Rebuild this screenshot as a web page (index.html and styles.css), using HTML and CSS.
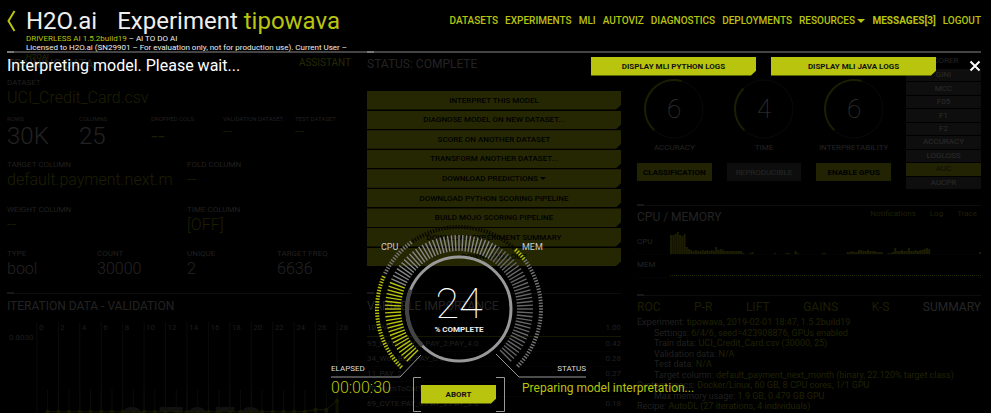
FILE: index.html
```html
<!DOCTYPE html>
<html lang="en">
<head>
<meta charset="utf-8">
<title>H2O.ai Experiment tipowava</title>
<link rel="stylesheet" href="styles.css">
</head>
<body>
<header class="topbar">
  <div class="brand">
    <div class="brand-row">
      <a class="back" href="#" aria-label="Back"><svg width="9" height="22" viewBox="0 0 9 22"><path d="M7.500 1L1.500 11l6 10"/></svg></a>
      <h1 class="brand-title"><span class="company">H2O.ai</span><span>Experiment <span class="accent">tipowava</span></span></h1>
    </div>
    <p class="license"><span class="accent">DRIVERLESS AI 1.5.2build19</span> – AI TO DO AI<br>Licensed to H2O.ai (SN29901 – For evaluation only, not for production use). Current User –<br><span class="accent">H2OAI</span></p>
  </div>
  <nav class="nav">
    <a href="#">DATASETS</a><a href="#">EXPERIMENTS</a><a href="#">MLI</a><a href="#">AUTOVIZ</a><a href="#">DIAGNOSTICS</a><a href="#">DEPLOYMENTS</a><a href="#">RESOURCES <span class="caret"></span></a><a class="strong" href="#">MESSAGES[3]</a><a href="#">LOGOUT</a>
  </nav>
</header>

<main class="dashboard">
  <div class="column">
    <section class="panel training">
      <div class="panel-head"><h2>TRAINING DATA</h2><a class="assistant" href="#">ASSISTANT</a></div>
      <dl class="facts one"><div><dt>DATASET</dt><dd class="accent">UCI_Credit_Card.csv</dd></div></dl>
      <dl class="facts five">
        <div><dt>ROWS</dt><dd>30K</dd></div><div><dt>COLUMNS</dt><dd>25</dd></div>
        <div><dt>DROPPED COLS</dt><dd class="accent">--</dd></div>
        <div><dt>VALIDATION DATASET</dt><dd class="accent small">--</dd></div>
        <div><dt>TEST DATASET</dt><dd class="accent small">--</dd></div>
      </dl>
      <dl class="facts two">
        <div><dt>TARGET COLUMN</dt><dd class="accent">default.payment.next.month</dd></div>
        <div><dt>FOLD COLUMN</dt><dd class="accent">--</dd></div>
        <div><dt>WEIGHT COLUMN</dt><dd class="accent">--</dd></div>
        <div><dt>TIME COLUMN</dt><dd class="accent">[OFF]</dd></div>
      </dl>
      <dl class="facts four">
        <div><dt>TYPE</dt><dd>bool</dd></div><div><dt>COUNT</dt><dd>30000</dd></div>
        <div><dt>UNIQUE</dt><dd>2</dd></div><div><dt>TARGET FREQ</dt><dd>6636</dd></div>
      </dl>
    </section>
    <section class="panel ruled">
      <div class="panel-head"><h2>ITERATION DATA - VALIDATION</h2></div>
      <svg class="iterations" id="iterations" viewBox="0 0 345 110"></svg>
    </section>
  </div>

  <div class="column">
    <section class="panel status">
      <div class="panel-head"><h2>STATUS: COMPLETE</h2></div>
      <div class="actions">
        <button>INTERPRET THIS MODEL</button>
        <button>DIAGNOSE MODEL ON NEW DATASET...</button>
        <button>SCORE ON ANOTHER DATASET</button>
        <button>TRANSFORM ANOTHER DATASET...</button>
        <button>DOWNLOAD PREDICTIONS <span class="caret"></span></button>
        <button>DOWNLOAD PYTHON SCORING PIPELINE</button>
        <button>BUILD MOJO SCORING PIPELINE</button>
        <button>DOWNLOAD EXPERIMENT SUMMARY</button>
        <button>DOWNLOAD LOGS</button>
      </div>
    </section>
    <section class="panel ruled">
      <div class="panel-head"><h2>VARIABLE IMPORTANCE</h2></div>
      <table class="importance">
        <tr class="full"><td>10_PAY_0</td><td>1.00</td></tr>
        <tr><td>95_CVTE:PAY_0:PAY_2:PAY_4.0</td><td>0.42</td></tr>
        <tr><td>34_WoE:BILL:PAY_0.0</td><td>0.28</td></tr>
        <tr><td>11_PAY_2</td><td>0.27</td></tr>
        <tr><td>70_NumToCatTE:PAY_0</td><td>0.26</td></tr>
        <tr><td>69_CVTE:PAY_0:PAY_2:PAY_3.0</td><td>0.18</td></tr>
      </table>
    </section>
  </div>

  <div class="column">
    <section class="panel settings">
      <div class="knobs">
        <div class="knob"><svg viewBox="0 0 60 60"><circle class="track" cx="30" cy="30" r="29"/><circle class="arc" cx="30" cy="30" r="29" pathLength="360" stroke-dasharray="152 208" transform="rotate(133 30 30)"/><text x="30" y="39">6</text></svg><span>ACCURACY</span><button>CLASSIFICATION</button></div>
        <div class="knob"><svg viewBox="0 0 60 60"><circle class="track" cx="30" cy="30" r="29"/><circle class="arc" cx="30" cy="30" r="29" pathLength="360" stroke-dasharray="92 268" transform="rotate(133 30 30)"/><text x="30" y="39">4</text></svg><span>TIME</span><button class="off">REPRODUCIBLE</button></div>
        <div class="knob"><svg viewBox="0 0 60 60"><circle class="track" cx="30" cy="30" r="29"/><circle class="arc" cx="30" cy="30" r="29" pathLength="360" stroke-dasharray="152 208" transform="rotate(133 30 30)"/><text x="30" y="39">6</text></svg><span>INTERPRETABILITY</span><button>ENABLE GPUS</button></div>
      </div>
      <div class="scorers"><h3>SCORER</h3>
        <div class="scorer-list"><button>GINI</button><button>MCC</button><button>F05</button><button>F1</button><button>F2</button><button>ACCURACY</button><button>LOGLOSS</button><button class="selected">AUC</button><button>AUCPR</button></div>
      </div>
    </section>
    <section class="panel ruled usage">
      <div class="panel-head"><h2>CPU / MEMORY</h2><div class="links"><a href="#">Notifications</a><a href="#">Log</a><a href="#">Trace</a></div></div>
      <div class="meter"><span>CPU</span><svg id="cpu" viewBox="0 0 311 24"></svg></div>
      <div class="meter"><span>MEM</span><svg viewBox="0 0 311 24"><path class="mem" d="M0 22.500h311"/></svg></div>
    </section>
    <section class="panel ruled">
      <div class="tabs"><a href="#">ROC</a><a href="#">P-R</a><a href="#">LIFT</a><a href="#">GAINS</a><a href="#">K-S</a><a class="current" href="#">SUMMARY</a></div>
      <div class="summary">
        <p>Experiment: <b>tipowava, 2019-02-01 18:47, 1.5.2build19</b></p>
        <p class="in">Settings: <b>6/4/6, seed=423908876, GPUs enabled</b></p>
        <p class="in">Train data: <b>UCI_Credit_Card.csv (30000, 25)</b></p>
        <p class="in">Validation data: <b>N/A</b></p>
        <p class="in">Test data: <b>N/A</b></p>
        <p class="in">Target column: <b>default_payment_next_month (binary, 22.120% target class)</b></p>
        <p>System specs: <b>Docker/Linux, 60 GB, 8 CPU cores, 1/1 GPU</b></p>
        <p class="in">Max memory usage: <b>1.9 GB, 0.479 GB GPU</b></p>
        <p>Recipe: <b>AutoDL (27 iterations, 4 individuals)</b></p>
        <p class="in">Validation scheme: <b>stratified, 1 internal holdout</b></p>
      </div>
    </section>
  </div>
</main>

<div class="overlay" role="dialog" aria-label="Interpreting model">
  <div class="overlay-head">
    <h2>Interpreting model. Please wait...</h2>
    <div class="log-buttons"><button class="primary">DISPLAY MLI PYTHON LOGS</button><button class="primary">DISPLAY MLI JAVA LOGS</button></div>
    <button class="close" aria-label="Close"><svg width="12" height="12" viewBox="0 0 12 12"><path d="M1.500 1.500l9 9M10.500 1.500l-9 9"/></svg></button>
  </div>
  <div class="progress">
    <svg class="dial" viewBox="0 0 255 190">
      <g id="ticks"></g>
      <circle class="ring" cx="128" cy="86" r="52"/>
      <path class="ring-done" d="M91.200 122.800A52 52 0 0 1 79.700 66.700"/>
      <text class="tag" x="50" y="27">CPU</text><text class="tag" x="191" y="27">MEM</text>
      <text class="percent" x="128" y="95">24</text><text class="caption" x="128" y="109">% COMPLETE</text>
      <path class="leader" d="M0 154H69L90 132M165 131L188 154H255"/>
      <path class="bracket" d="M90 154.500H82.500V188.500H90M165 154.500H173.500V188.500H165"/>
    </svg>
    <div class="elapsed-label">ELAPSED</div><div class="status-label">STATUS</div>
    <div class="elapsed">00:00:30</div>
    <button class="primary abort">ABORT</button>
    <div class="message">Preparing model interpretation...</div>
  </div>
</div>
<script src="script.js"></script>
</body>
</html>
```
FILE: styles.css
```css
:root { --lime: #b8c40e; --sans: Roboto, "Liberation Sans", sans-serif; }
* { box-sizing: border-box; }
body { margin: 0; height: 100vh; overflow: hidden; background: #000; color: #eee; font-family: var(--sans); position: relative; }
h1, h2, h3, p, dl, dd { margin: 0; font-weight: 400; }
a { color: var(--lime); text-decoration: none; }
button { font-family: inherit; border: 0; padding: 0; cursor: pointer; }
svg { display: block; }
.accent { color: var(--lime); }
.caret { display: inline-block; border: 4px solid transparent; border-top-color: currentColor; border-bottom: 0; vertical-align: middle; }

.topbar { height: 53px; margin: 0 10px 0 7px; display: flex; justify-content: space-between; border-bottom: 2px solid #444; }
.brand { white-space: nowrap; width: 345px; }
.brand-row { display: flex; align-items: center; height: 34px; padding-top: 8px; }
.back { flex: 0 0 19px; }
.back path { fill: none; stroke: var(--lime); stroke-width: 2; }
.brand-title { display: flex; gap: 20px; font-size: 24px; line-height: 26px; }
.license { margin-left: 19px; font-size: 8px; line-height: 9px; }
.nav { display: flex; gap: 7px; font-size: 10px; font-weight: 500; line-height: 14px; padding-top: 14px; white-space: nowrap; }
.nav .strong { font-weight: 700; }

.dashboard { display: grid; grid-template-columns: 344fr 254fr 344fr; gap: 16px; padding: 0 10px 0 7px; }
.column { min-width: 0; }
.panel-head { display: flex; justify-content: space-between; }
.panel-head h2 { font-size: 12px; line-height: 22px; color: #aaa; white-space: nowrap; }
.ruled .panel-head h2 { line-height: 24px; }
.column > .panel::before { content: ""; display: block; width: 7px; height: 2px; margin-top: -2px; background: #777; }
.ruled { border-top: 1px solid #444; }
.training, .status { height: 242px; }
.assistant { font-size: 10px; line-height: 20px; }

.facts { display: grid; margin-right: -16px; white-space: nowrap; }
.facts > div { min-width: 0; overflow: hidden; }
.facts dt { font-size: 8px; line-height: 12px; color: #999; }
.facts dd { font-weight: 300; font-size: 16px; line-height: 18px; color: #aaa; margin-right: 15px; overflow: hidden; }
.facts dd.accent { color: #8a920a; }
.one { padding-top: 2px; }
.five { grid-template-columns: repeat(5, 1fr); padding-top: 6px; }
.facts.five dt { font-size: 6px; }
.facts.five dd { font-size: 24px; line-height: 22px; }
.facts.five dd.small { font-size: 16px; line-height: 14px; }
.two { grid-template-columns: repeat(2, 1fr); padding-top: 12px; row-gap: 15px; }
.four { grid-template-columns: repeat(4, 1fr); padding-top: 14px; }

.iterations { width: 100%; }
.iterations .grid { stroke: #3a3a3a; }
.iterations .bar { stroke: #4a5005; stroke-width: 3; }
.iterations .line { stroke: #70780a; fill: none; }
.iterations .dot { fill: #70780a; }
.iterations text { fill: #888; font-size: 8px; }
.iterations .big { font-size: 46px; font-weight: 700; fill: #555; }

.actions { margin-top: 16px; height: 175px; display: flex; flex-direction: column; gap: 1px; }
.actions button { flex: 1; background: var(--lime); color: #000; font-size: 8px; font-weight: 500; clip-path: polygon(0 0, 100% 0, 100% 75%, calc(100% - 5px) 100%, 0 100%); }
.actions .caret { border-width: 3px 3px 0; }
.importance { width: 100%; border-collapse: collapse; margin-top: 3px; font-size: 8px; color: #999; }
.importance td { padding: 0; height: 15px; line-height: 14px; border-bottom: 1px solid #181818; }
.importance td:last-child { text-align: right; }
.importance .full td { border-bottom-color: #6d7400; }

.settings { display: grid; grid-template-columns: 254fr 75fr; height: 152px; gap: 15px; }
.column > .settings::before { display: none; }
.knobs { display: grid; grid-template-columns: repeat(3, 1fr); gap: 15px; padding-top: 26px; }
.knob { display: flex; flex-direction: column; align-items: center; white-space: nowrap; }
.knob svg { width: 60px; height: 60px; }
.knob circle { fill: none; }
.knob .track { stroke: #333; stroke-width: 1; }
.knob .arc { stroke: #8c950b; stroke-width: 2; }
.knob text { font: 100 26px Roboto; fill: #fff; text-anchor: middle; }
.knob span { font-size: 8px; line-height: 12px; color: #aaa; margin: 3px 0 9px; }
.knob button { width: 100%; height: 18px; background: #a3ad0a; color: #000; font-size: 8px; font-weight: 700; }
.knob .off { background: #444; color: #bbb; font-weight: 400; }
.scorers h3 { text-align: center; font-size: 8px; line-height: 16px; color: #aaa; }
.scorer-list { display: flex; flex-direction: column; gap: 1px; height: 120px; }
.scorer-list button { flex: 1; background: #484848; color: #ccc; font-size: 8px; line-height: 12px; }
.scorer-list .selected { background: #a3ad0a; color: #444; }
.usage { height: 90px; }
.usage .panel-head h2 { line-height: 22px; }
.links { display: flex; gap: 14px; font-size: 8px; line-height: 16px; padding-right: 4px; }
.links a { color: #8a920a; }
.meter { display: flex; align-items: flex-end; height: 23px; font-size: 8px; line-height: 24px; color: #aaa; border-bottom: 1px solid #181818; }
.meter:nth-of-type(2) { height: 27px; }
.meter span { width: 33px; }
.meter svg { flex: 1; min-width: 0; }
.bars { stroke: #8a920a; stroke-width: 2; fill: none; }
.mem { stroke: #b8c40e; stroke-width: 1; stroke-dasharray: 1 1; }
.tabs { display: flex; justify-content: space-between; font-size: 12px; line-height: 22px; }
.tabs a { color: #8a920a; }
.tabs .current { color: #bbb; }
.summary { display: flex; flex-direction: column; height: 105px; font-size: 9px; color: #999; white-space: nowrap; }
.summary p { flex: 1; line-height: 8px; }
.summary .in { padding-left: 17px; }
.summary b { font-weight: 400; color: #99a20b; }

.overlay { position: absolute; top: 53px; right: 0; bottom: 0; left: 0; display: flex; flex-direction: column; justify-content: space-between; background: rgba(0, 0, 0, .8); }
.overlay-head { display: flex; align-items: center; height: 26px; padding: 0 10px 0 7px; }
.overlay-head h2 { flex: 1; font-size: 16px; line-height: 24px; color: #fff; }
.log-buttons { display: flex; gap: 15px; }
.primary { width: 165px; height: 19px; background: var(--lime); color: #111; font-size: 8px; font-weight: 700; clip-path: polygon(0 0, 100% 0, 100% 75%, calc(100% - 5px) 100%, 0 100%); }
.close { background: none; margin-left: 33px; }
.close path { stroke: #fff; stroke-width: 2; }
.progress { align-self: center; margin-right: 74px; width: 255px; display: grid; grid-template: 140px 12px 38px / minmax(0, 1fr) 75px minmax(0, 1fr); white-space: nowrap; }
.dial { grid-area: 1 / 1 / 4 / 4; width: 100%; }
.ring { fill: none; stroke: #999; stroke-width: 3; }
.ring-done { fill: none; stroke: #444; stroke-width: 4; }
.leader, .bracket { fill: none; stroke: #999; stroke-width: 1; }
.tag { fill: #ccc; font-size: 9px; }
.percent { font: 100 43px Roboto; fill: #fff; text-anchor: middle; }
.caption { fill: #eee; font-size: 8px; font-weight: 700; text-anchor: middle; }
.elapsed-label, .status-label { grid-row: 2; font-size: 8px; line-height: 12px; color: #ddd; }
.elapsed-label { grid-column: 1; }
.status-label { grid-column: 3; text-align: right; }
.elapsed, .message { grid-row: 3; padding-top: 3px; line-height: 20px; color: var(--lime); }
.elapsed { grid-column: 1; font-size: 16px; font-weight: 300; }
.message { grid-column: 3; padding-left: 26px; font-size: 12px; }
.abort { grid-area: 3 / 2; align-self: center; width: 75px; }
```
FILE: script.js
```js
const NS = "http://www.w3.org/2000/svg";
function add(parent, name, attrs, text) {
  const el = document.createElementNS(NS, name);
  for (const key in attrs) el.setAttribute(key, attrs[key]);
  if (text !== undefined) el.textContent = text;
  parent.appendChild(el);
}

// Dial ticks: each run is [start angle, end angle, step, inner radius, outer radius, colour].
const ticks = document.getElementById("ticks");
[
  [135, 201, 3, 58, 74, "#b8c40e"], [204, 300, 3, 58, 74, "#888"], [303, 405, 3, 58, 74, "#666"],
  [135, 204, 2, 80, 84, "#b8c40e"], [206, 234, 2, 80, 84, "#777"],
  [236, 312, 2, 80, 84, "#090900"], [314, 322, 2, 80, 84, "#b8c40e"],
  [324, 405, 2, 80, 84, "#777"]
].forEach(([from, to, step, r1, r2, colour]) => {
  for (let a = from; a <= to; a += step) {
    const c = Math.cos(a * Math.PI / 180), s = Math.sin(a * Math.PI / 180);
    add(ticks, "line", { x1: 128 + r1 * c, y1: 86 + r1 * s, x2: 128 + r2 * c, y2: 86 + r2 * s, stroke: colour, "stroke-width": 1.4 });
  }
});

// CPU history
const cpu = document.getElementById("cpu");
const load = [19,19,20,22,19,18,20,7,5,4,3,4,3,3,4,3,4,3,4,3,7,4,5,4,3,3,3,3,3,3,3,3,1,0,0,1,2,0,0,0,0,0,0,0,0,0,1,0,0,0,0,1,1,0,0,3,1,0,0,0,0,0,0,0,0,0,0,1,1,0,0,0,0,0,0,0,0,0,2,2,3,2,2,4,4,3,3,4,3,3,3,2,2,2,0,0,1,1,2,6,3,3,4,3,3,6,3,3,4,3,4,4,5,6,5];
let bars = "";
load.forEach((v, i) => { if (v) bars += `M${1 + i * 2.265} 24v-${v}`; });
bars += "M310 24v-2";
add(cpu, "path", { d: bars, class: "bars" });

// Validation chart
const chart = document.getElementById("iterations");
add(chart, "text", { x: 112, y: 122, class: "big" }, "0.7950");
add(chart, "text", { x: 2, y: 22 }, "0.8030");
const step = 10.75;
let line = "";
for (let i = 0; i <= 28; i++) {
  const x = 30 + i * step;
  const y = i === 28 ? 83 : i > 25 ? 92 : 94;
  if (i % 2 === 0) {
    add(chart, "line", { x1: x, x2: x, y1: 4, y2: 110, class: "grid" });
    add(chart, "text", { x: x + 2, y: 12 }, i);
  }
  if (i > 0) {
    add(chart, "line", { x1: x, x2: x, y1: 72, y2: 110, class: "grid" });
    add(chart, "line", { x1: x, x2: x, y1: y, y2: 110, class: "bar" });
    add(chart, "circle", { cx: x, cy: y, r: 2, class: "dot" });
    line += (line ? "L" : "M") + x + " " + y;
  }
}
add(chart, "path", { d: line, class: "line" });
```
